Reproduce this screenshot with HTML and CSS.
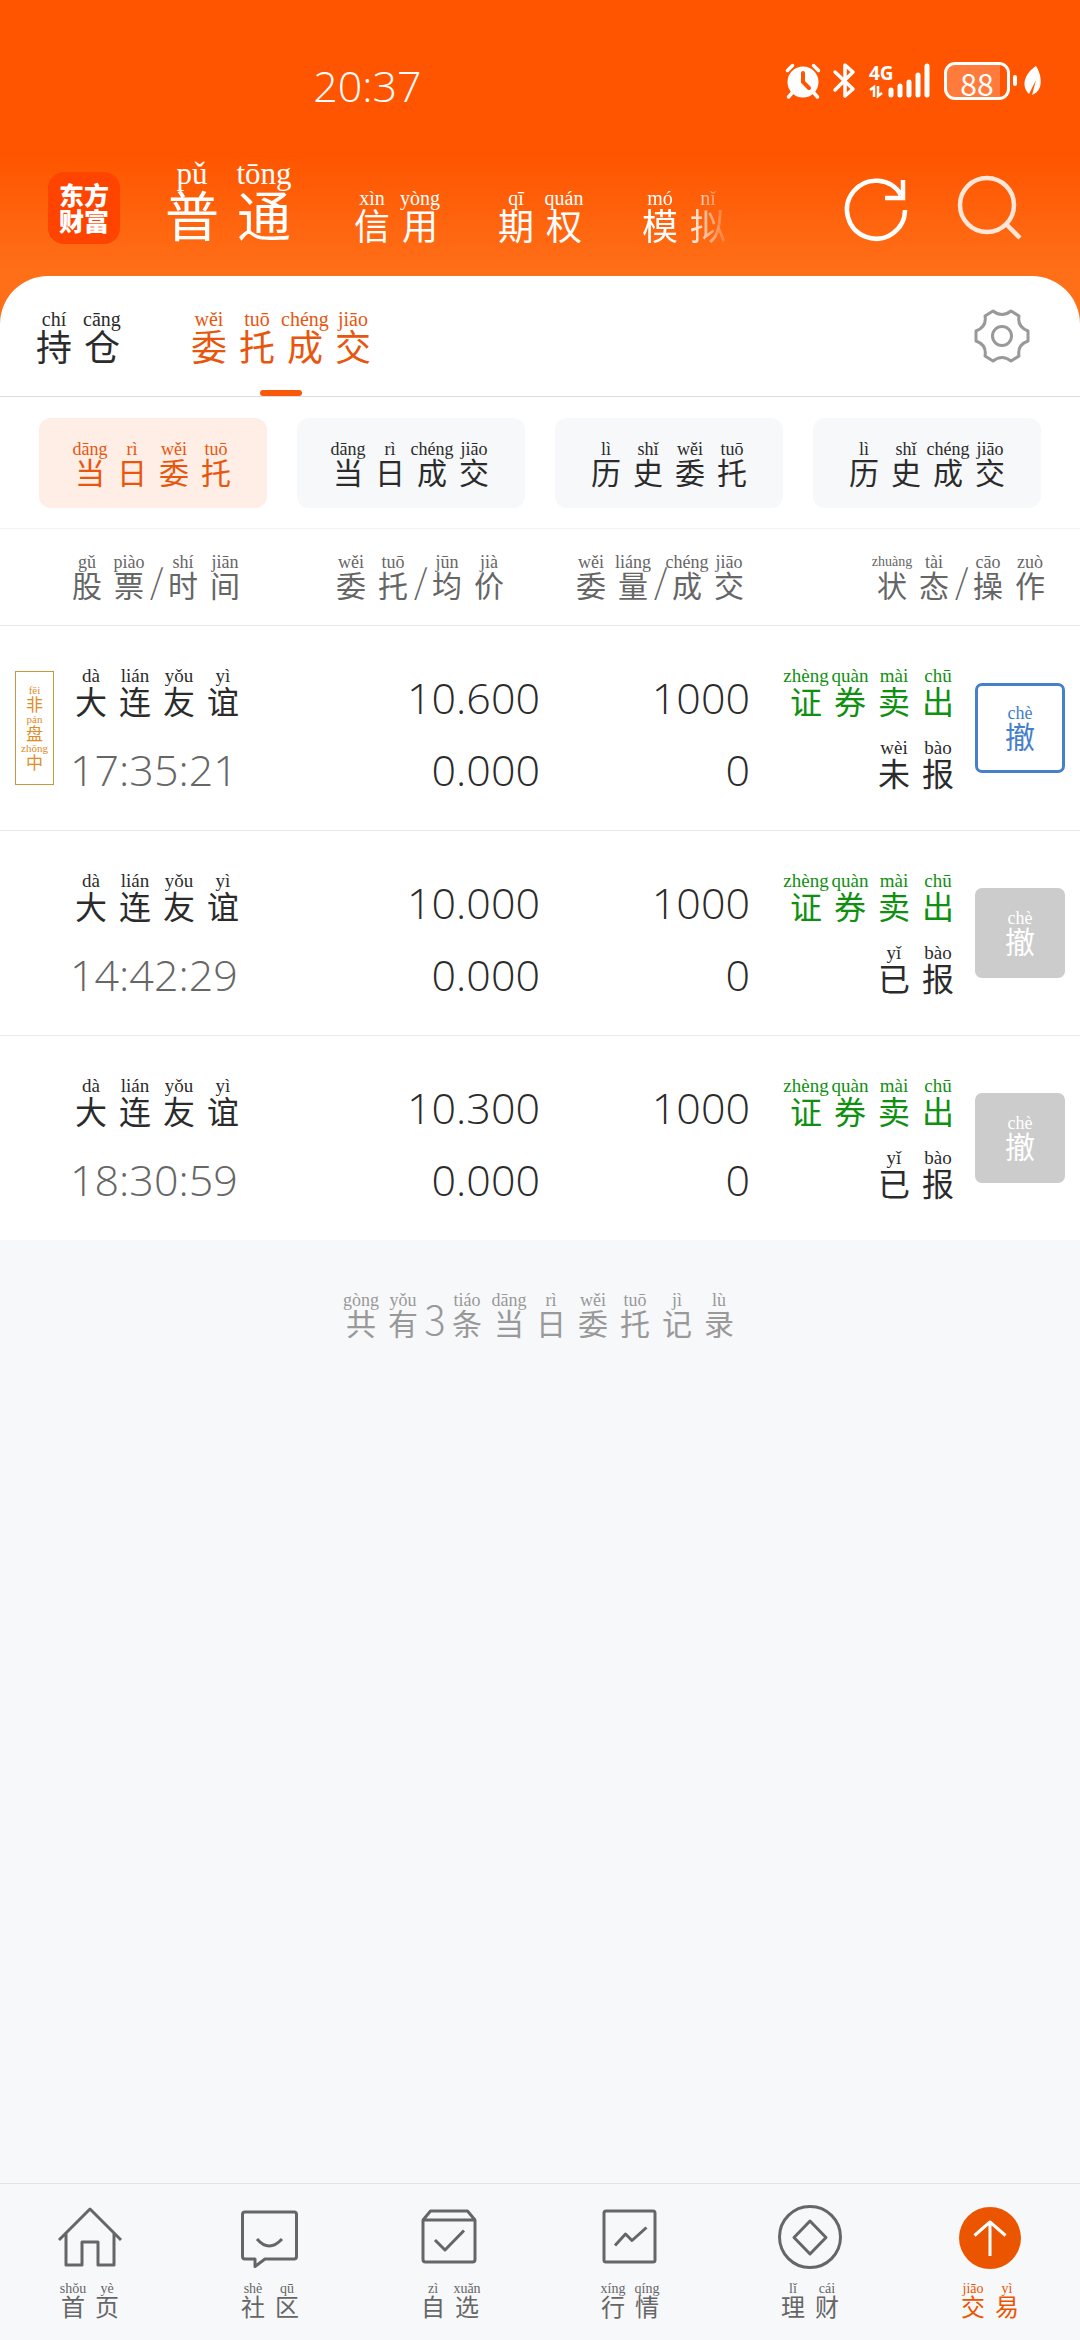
FILE: index.html
```html
<!DOCTYPE html>
<html lang="zh-CN">
<head>
<meta charset="utf-8">
<meta name="viewport" content="width=device-width, initial-scale=1">
<title>委托成交</title>
<link rel="stylesheet" href="styles.css">
</head>
<body>
<div class="app">
  <div class="top">
    <div class="status">
      <span class="clock">20:37</span>
      <span class="indicators">
        <svg width="36" height="38" viewBox="0 0 36 38" fill="none" stroke="#fff" stroke-linecap="round"><circle cx="18" cy="20" r="15.500" fill="#fff" stroke="none"/><path d="M2.500 8.500l5-5M33.500 8.500l-5-5M7 31l-3.500 4M29 31l3.500 4" stroke-width="3.500"/><path d="M18 11v9l6 6" stroke="#ff5500" stroke-width="4"/></svg>
        <svg width="24" height="38" viewBox="0 0 24 38" fill="none" stroke="#fff" stroke-width="3.500" stroke-linecap="round" stroke-linejoin="round"><path d="M3 10l18 17-8 7V20M13 16V3l8 7L3 28"/></svg>
        <svg class="signal" width="64" height="38" viewBox="0 0 64 38" role="img"><text x="0" y="18" class="net">4G</text><path d="M1 28l4-3v10M9 24v10l4-3" fill="none" stroke="#fff" stroke-width="2.500"/><path d="M22 28v5M31 24v9M40 20v13M49 13v20M58 4v29" fill="none" stroke="#fff" stroke-width="5" stroke-linecap="round"/></svg>
        <span class="battery">88</span>
        <svg width="30" height="38" viewBox="0 0 30 38" fill="#fff"><rect x="0" y="13" width="4" height="11" rx="2"/><path d="M23 4c6 9 8 25-4 29l4-15-7 14C8 24 11 12 23 4z"/></svg>
      </span>
    </div>
    <header class="bar">
      <a class="logo" href="#">东方<br>财富</a>
      <nav class="accounts">
        <a class="zh lg" href="#"><ruby>普<rt>pǔ</rt></ruby><ruby>通<rt>tōng</rt></ruby></a>
        <a class="zh md" href="#"><ruby>信<rt>xìn</rt></ruby><ruby>用<rt>yòng</rt></ruby></a>
        <a class="zh md" href="#"><ruby>期<rt>qī</rt></ruby><ruby>权<rt>quán</rt></ruby></a>
        <a class="zh md fading" href="#"><ruby>模<rt>mó</rt></ruby><ruby>拟<rt>nǐ</rt></ruby></a>
      </nav>
      <div class="tools">
        <button type="button" aria-label="刷新"><svg width="72" height="72" viewBox="0 0 72 72" fill="none" stroke="#fff" stroke-width="4.500"><path d="M65 38A29 29 0 1 1 61 23M63 8v18H45"/></svg></button>
        <button type="button" aria-label="搜索"><svg width="72" height="72" viewBox="0 0 72 72" fill="none" stroke="#ffe6d8" stroke-width="4.500"><circle cx="36" cy="33" r="27"/><path d="M55 52l14 14"/></svg></button>
      </div>
    </header>
    <div class="tabs">
      <a class="zh md tab" href="#"><ruby>持<rt>chí</rt></ruby><ruby>仓<rt>cāng</rt></ruby></a>
      <a class="zh md tab active" href="#"><ruby>委<rt>wěi</rt></ruby><ruby>托<rt>tuō</rt></ruby><ruby>成<rt>chéng</rt></ruby><ruby>交<rt>jiāo</rt></ruby></a>
      <button type="button" class="gear" aria-label="设置"><svg width="60" height="60" viewBox="-30 -30 60 60" fill="none" stroke="#999" stroke-width="3" stroke-linejoin="round"><path d="M-26-5Q-15-9-17-20L-9-25Q0-18 9-25L17-20Q15-9 26-5V5Q15 9 17 20L9 25Q0 18-9 25L-17 20Q-15 9-26 5Z"/><circle r="9.500"/></svg></button>
    </div>
  </div>

  <main>
    <div class="filters">
      <button type="button" class="zh sm active"><ruby>当<rt>dāng</rt></ruby><ruby>日<rt>rì</rt></ruby><ruby>委<rt>wěi</rt></ruby><ruby>托<rt>tuō</rt></ruby></button>
      <button type="button" class="zh sm"><ruby>当<rt>dāng</rt></ruby><ruby>日<rt>rì</rt></ruby><ruby>成<rt>chéng</rt></ruby><ruby>交<rt>jiāo</rt></ruby></button>
      <button type="button" class="zh sm"><ruby>历<rt>lì</rt></ruby><ruby>史<rt>shǐ</rt></ruby><ruby>委<rt>wěi</rt></ruby><ruby>托<rt>tuō</rt></ruby></button>
      <button type="button" class="zh sm"><ruby>历<rt>lì</rt></ruby><ruby>史<rt>shǐ</rt></ruby><ruby>成<rt>chéng</rt></ruby><ruby>交<rt>jiāo</rt></ruby></button>
    </div>
    <table class="orders">
      <colgroup><col><col class="c-price"><col class="c-qty"><col class="c-state"><col class="c-act"></colgroup>
      <thead>
        <tr>
          <th><span class="zh sm"><ruby>股<rt>gǔ</rt></ruby><ruby>票<rt>piào</rt></ruby><i>/</i><ruby>时<rt>shí</rt></ruby><ruby>间<rt>jiān</rt></ruby></span></th>
          <th><span class="zh sm"><ruby>委<rt>wěi</rt></ruby><ruby>托<rt>tuō</rt></ruby><i>/</i><ruby>均<rt>jūn</rt></ruby><ruby>价<rt>jià</rt></ruby></span></th>
          <th><span class="zh sm"><ruby>委<rt>wěi</rt></ruby><ruby>量<rt>liáng</rt></ruby><i>/</i><ruby>成<rt>chéng</rt></ruby><ruby>交<rt>jiāo</rt></ruby></span></th>
          <th colspan="2"><span class="zh sm"><ruby>状<rt class="long">zhuàng</rt></ruby><ruby>态<rt>tài</rt></ruby><i>/</i><ruby>操<rt>cāo</rt></ruby><ruby>作<rt>zuò</rt></ruby></span></th>
        </tr>
      </thead>
      <tbody>
        <tr>
          <td><div class="stock">
            <span class="badge zh xs"><ruby>非<rt>fēi</rt></ruby><ruby>盘<rt>pán</rt></ruby><ruby>中<rt>zhōng</rt></ruby></span>
            <div class="pair"><span class="zh row"><ruby>大<rt>dà</rt></ruby><ruby>连<rt>lián</rt></ruby><ruby>友<rt>yǒu</rt></ruby><ruby>谊<rt>yì</rt></ruby></span><span class="num time">17:35:21</span></div>
          </div></td>
          <td><div class="pair end"><span class="num">10.600</span><span class="num">0.000</span></div></td>
          <td><div class="pair end"><span class="num">1000</span><span class="num">0</span></div></td>
          <td><div class="pair end"><span class="zh row sell"><ruby>证<rt>zhèng</rt></ruby><ruby>券<rt>quàn</rt></ruby><ruby>卖<rt>mài</rt></ruby><ruby>出<rt>chū</rt></ruby></span><span class="zh row"><ruby>未<rt>wèi</rt></ruby><ruby>报<rt>bào</rt></ruby></span></div></td>
          <td><button type="button" class="cancel zh sm"><ruby>撤<rt>chè</rt></ruby></button></td>
        </tr>
        <tr>
          <td><div class="stock">
            <div class="pair"><span class="zh row"><ruby>大<rt>dà</rt></ruby><ruby>连<rt>lián</rt></ruby><ruby>友<rt>yǒu</rt></ruby><ruby>谊<rt>yì</rt></ruby></span><span class="num time">14:42:29</span></div>
          </div></td>
          <td><div class="pair end"><span class="num">10.000</span><span class="num">0.000</span></div></td>
          <td><div class="pair end"><span class="num">1000</span><span class="num">0</span></div></td>
          <td><div class="pair end"><span class="zh row sell"><ruby>证<rt>zhèng</rt></ruby><ruby>券<rt>quàn</rt></ruby><ruby>卖<rt>mài</rt></ruby><ruby>出<rt>chū</rt></ruby></span><span class="zh row"><ruby>已<rt>yǐ</rt></ruby><ruby>报<rt>bào</rt></ruby></span></div></td>
          <td><button type="button" class="cancel zh sm" disabled><ruby>撤<rt>chè</rt></ruby></button></td>
        </tr>
        <tr>
          <td><div class="stock">
            <div class="pair"><span class="zh row"><ruby>大<rt>dà</rt></ruby><ruby>连<rt>lián</rt></ruby><ruby>友<rt>yǒu</rt></ruby><ruby>谊<rt>yì</rt></ruby></span><span class="num time">18:30:59</span></div>
          </div></td>
          <td><div class="pair end"><span class="num">10.300</span><span class="num">0.000</span></div></td>
          <td><div class="pair end"><span class="num">1000</span><span class="num">0</span></div></td>
          <td><div class="pair end"><span class="zh row sell"><ruby>证<rt>zhèng</rt></ruby><ruby>券<rt>quàn</rt></ruby><ruby>卖<rt>mài</rt></ruby><ruby>出<rt>chū</rt></ruby></span><span class="zh row"><ruby>已<rt>yǐ</rt></ruby><ruby>报<rt>bào</rt></ruby></span></div></td>
          <td><button type="button" class="cancel zh sm" disabled><ruby>撤<rt>chè</rt></ruby></button></td>
        </tr>
      </tbody>
    </table>
    <p class="summary zh sm"><ruby>共<rt>gòng</rt></ruby><ruby>有<rt>yǒu</rt></ruby><b>3</b><ruby>条<rt>tiáo</rt></ruby><ruby>当<rt>dāng</rt></ruby><ruby>日<rt>rì</rt></ruby><ruby>委<rt>wěi</rt></ruby><ruby>托<rt>tuō</rt></ruby><ruby>记<rt>jì</rt></ruby><ruby>录<rt>lù</rt></ruby></p>
  </main>

  <nav class="bottom">
    <a href="#"><svg width="66" height="66" viewBox="0 0 66 66"><path d="M2 36L33 5l31 31M9 29v32h16V38h16v23h16V29"/></svg><span class="zh nav"><ruby>首<rt>shǒu</rt></ruby><ruby>页<rt>yè</rt></ruby></span></a>
    <a href="#"><svg width="66" height="66" viewBox="0 0 66 66"><path d="M8 8h49q2.500 0 2.500 2.500v42q0 2.500-2.500 2.500H28l-10 7.500V55H8q-2.500 0-2.500-2.500v-42Q5.500 8 8 8zM20 35q12 14 25 0"/></svg><span class="zh nav"><ruby>社<rt>shè</rt></ruby><ruby>区<rt>qū</rt></ruby></span></a>
    <a href="#"><svg width="66" height="66" viewBox="0 0 66 66"><path d="M6 16h52v39.500q0 2.500-2.500 2.500h-47Q6 58 6 55.500zl7.500-9h37l7.500 9M18 36l10 10 19-19.500"/></svg><span class="zh nav"><ruby>自<rt>zì</rt></ruby><ruby>选<rt>xuǎn</rt></ruby></span></a>
    <a href="#"><svg width="66" height="66" viewBox="0 0 66 66"><rect x="7" y="7" width="51" height="51" rx="2"/><path d="M18 41.500L28.500 30l6.500 6.500 14.500-13"/></svg><span class="zh nav"><ruby>行<rt>xíng</rt></ruby><ruby>情<rt>qíng</rt></ruby></span></a>
    <a href="#"><svg width="66" height="66" viewBox="0 0 66 66"><circle cx="33" cy="33" r="30.500"/><path d="M33 17l16 16.500L33 50 17 33.500z"/></svg><span class="zh nav"><ruby>理<rt>lǐ</rt></ruby><ruby>财<rt>cái</rt></ruby></span></a>
    <a href="#" class="active"><svg width="66" height="66" viewBox="0 0 66 66"><circle cx="33" cy="34" r="31" fill="#eb5500" stroke="none"/><path d="M33 52V18M17.500 31.500L33 18l15.500 13.500" stroke="#fff"/></svg><span class="zh nav"><ruby>交<rt>jiāo</rt></ruby><ruby>易<rt>yì</rt></ruby></span></a>
  </nav>
</div>
</body>
</html>
```
FILE: styles.css
```css
* { box-sizing: border-box; }

body {
  margin: 0;
  background: #f7f8fa;
  color: #2b2b2b;
  font-family: "Noto Sans CJK SC", sans-serif;
}

a { color: inherit; text-decoration: none; }
button { border: 0; padding: 0; background: none; color: inherit; font: inherit; }
svg { display: block; overflow: visible; }

.app { min-height: 100vh; display: flex; flex-direction: column; }
main { flex: 1; }

/* Hanzi with pinyin stacked above, one fixed cell per character */
.zh {
  display: flex;
  align-items: flex-end;
  font-weight: 400;
  white-space: nowrap;
}
.zh ruby {
  display: flex;
  flex-direction: column-reverse;
  align-items: center;
  padding-bottom: 4px;
}
.zh rt { display: block; font-family: "Liberation Serif", serif; font-weight: 400; }
.zh i, .zh b { font-weight: 300; font-style: normal; text-align: center; }

.lg { font-size: 54px; line-height: 48px; }
.lg ruby { width: 72px; padding-bottom: 6px; }
.lg rt { font-size: 31px; line-height: 32px; }
.md { font-size: 36px; line-height: 32px; }
.md ruby { width: 48px; }
.md rt { font-size: 20px; line-height: 20px; }
.row { font-size: 32px; line-height: 28px; }
.row ruby { width: 44px; }
.row rt { font-size: 19px; line-height: 20px; }
.sm { font-size: 30px; line-height: 26px; }
.sm ruby { width: 42px; }
.sm rt { font-size: 18px; line-height: 18px; }
.sm i { width: 12px; font-size: 34px; line-height: 42px; }
.sm .long { font-size: 14px; }
.nav { font-size: 24px; line-height: 20px; }
.nav ruby { width: 34px; }
.nav rt { font-size: 14px; line-height: 14px; }
.xs { font-size: 17px; line-height: 15px; }
.xs ruby { padding-bottom: 2px; }
.xs rt { font-size: 11px; line-height: 12px; }

/* Header */
.top { background: linear-gradient(#ff5500 156px, #ff6f18 270px); color: #fff; }
.status {
  display: flex;
  justify-content: space-between;
  align-items: flex-start;
  min-height: 156px;
  padding: 62px 37px 0 29%;
}
.clock, .num { font-family: "Open Sans", sans-serif; font-size: 43px; font-weight: 300; }
.clock { line-height: 48px; }
.indicators { display: flex; align-items: center; gap: 11px; }
.signal { margin-left: 2px; }
.net { font: 700 19px "Noto Sans", sans-serif; fill: #fff; }
.battery {
  width: 66px;
  height: 38px;
  margin-right: -8px;
  border: 3px solid #fff;
  border-radius: 11px;
  background: linear-gradient(to right, #ff7b3c 88%, transparent 88%);
  font-size: 30px;
  line-height: 36px;
  text-align: center;
}
.bar {
  display: flex;
  align-items: flex-end;
  height: 120px;
  padding: 0 57px 32px 48px;
}
.logo {
  width: 72px;
  height: 72px;
  padding-top: 9px;
  border-radius: 16px;
  background: #ff4400;
  font-size: 25px;
  line-height: 26px;
  font-weight: 900;
  text-align: center;
}
.accounts {
  flex: 1;
  display: flex;
  align-items: flex-end;
  gap: 48px;
  margin-left: 36px;
}
.fading {
  -webkit-mask-image: linear-gradient(to left, transparent, #000 44px);
  mask-image: linear-gradient(to left, transparent, #000 44px);
}
.tools { display: flex; gap: 39px; }

/* Section tabs */
.tabs {
  display: flex;
  align-items: flex-start;
  height: 121px;
  padding: 0 48px 0 30px;
  border-radius: 48px 48px 0 0;
  border-bottom: 1px solid #ddd;
  background: #fff;
  color: #2b2b2b;
}
.tab { position: relative; height: 120px; padding-bottom: 31px; margin-right: 59px; }
.tab.active { color: #e8560e; }
.tab.active::after {
  content: "";
  position: absolute;
  left: calc(50% - 21px);
  bottom: 0;
  width: 42px;
  height: 6px;
  border-radius: 3px;
  background: #f9590b;
}
.gear { margin: 30px 0 0 auto; }

/* Filters */
.filters {
  display: grid;
  grid-template-columns: repeat(4, 1fr);
  gap: 30px;
  padding: 21px 39px 20px;
  background: #fff;
  border-bottom: 1px solid #f2f2f4;
}
.filters button {
  justify-content: center;
  height: 90px;
  padding-bottom: 20px;
  border-radius: 12px;
  background: #f7f8fa;
}
.filters .active { background: #ffeee6; color: #e8560e; }

/* Orders */
.orders {
  width: 100%;
  table-layout: fixed;
  border-collapse: collapse;
  background: #fff;
}
.c-price { width: 230px; }
.c-qty, .c-state { width: 210px; }
.c-act { width: 120px; }
th, td { padding: 0; }
th { height: 96px; color: #666; border-bottom: 1px solid #eaeaea; }
th .zh { justify-content: flex-end; }
th:first-child .zh { justify-content: flex-start; padding-left: 66px; }
th:nth-child(2) .zh { padding-right: 30px; }
th:last-child .zh { padding-right: 29px; }
td { height: 205px; border-bottom: 1px solid #eaeaea; }
tbody tr:last-child td { border-bottom: 0; }
.stock { display: flex; align-items: center; justify-content: flex-end; padding-right: 50px; }
.stock .pair { width: 191px; }
.badge {
  flex-direction: column;
  align-items: center;
  justify-content: center;
  width: 39px;
  height: 114px;
  margin-right: 15px;
  border: 1px solid #c9983a;
  color: #dd8c28;
}
.pair { display: grid; gap: 20px; }
.pair.end { justify-items: end; }
.num { padding-top: 12px; line-height: 40px; }
.time { padding-left: 1px; color: #666; }
.sell { color: #109010; }
.cancel {
  align-items: center;
  justify-content: center;
  width: 90px;
  height: 90px;
  margin-left: 15px;
  border: 3px solid #4680c8;
  border-radius: 7px;
  color: #4680c8;
}
.cancel:disabled { border-color: #ccc; background: #ccc; color: #fff; }
.summary { justify-content: center; margin: 51px 0 0; color: #999; }
.summary b { width: 22px; font-size: 40px; line-height: 42px; }

/* Bottom navigation */
.bottom {
  display: grid;
  grid-template-columns: repeat(6, 1fr);
  border-top: 1px solid #e2e3e5;
  color: #666;
}
.bottom a {
  display: flex;
  flex-direction: column;
  align-items: center;
  gap: 12px;
  padding: 20px 0;
}
.bottom svg { fill: none; stroke: #666; stroke-width: 3px; stroke-linejoin: round; }
.bottom .active { color: #eb5500; }
```
